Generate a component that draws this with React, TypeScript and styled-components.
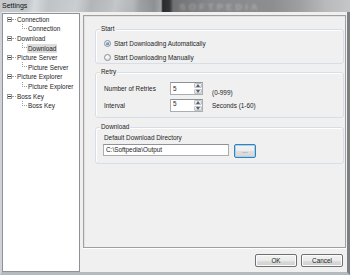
import React from 'react';
import styled, { createGlobalStyle } from 'styled-components';

const Global = createGlobalStyle`
  html, body { margin: 0; padding: 0; background: #f0f0f0; }
  body { font-family: "Liberation Sans", Arial, sans-serif; color: #1e1e1e; }
  * { box-sizing: border-box; }
`;

const Window = styled.div`
  width: 350px;
  height: 275px;
  display: flex;
  flex-direction: column;
  overflow: hidden;
  background: #f0f0f0;
`;

const TitleBar = styled.div`
  height: 12px;
  flex: none;
  display: flex;
  align-items: center;
  background:
    linear-gradient(100deg, transparent 0 8%, rgba(255,255,255,0.35) 10%, transparent 14%, rgba(255,255,255,0.25) 22%, transparent 26%, rgba(255,255,255,0.3) 33%, transparent 37%, rgba(0,0,0,0.08) 40%, transparent 44%),
    linear-gradient(90deg, #c6cacd 0%, #bcc0c3 20%, #a8acaf 32%, #b9bcbf 38%, #8e9194 44%, #a2a5a8 46%, #2a2a2a 46.5%, #363636 48.5%, #6f7173 49.5%, #85878a 60%, #8c8e90 78%, #9ea0a2 86%, #b7b9bb 93%, #c4c6c8 100%);
`;

const TitleText = styled.span`
  margin-left: 2px;
  font-size: 7px;
  line-height: 10px;
  color: #111;
`;

const Watermark = styled.span`
  margin-left: 152px;
  font-size: 9.5px;
  font-weight: bold;
  letter-spacing: 3px;
  line-height: 11px;
  color: rgba(220, 220, 220, 0.4);
  filter: blur(0.8px);
`;

const Frame = styled.div`
  flex: 1;
  display: flex;
  border-left: 2px solid #cfd3d7;
  border-right: 3px solid #7d8083;
  border-bottom: 3px solid #b4b9be;
  min-height: 0;
`;

const Tree = styled.div`
  width: 78px;
  flex: none;
  margin-top: 1px;
  background: #fff;
  border: 1px solid #8e9297;
  padding-top: 0.5px;
  display: flex;
  flex-direction: column;
`;

const TreeRow = styled.div`
  height: 9.6px;
  display: flex;
  align-items: center;
  font-size: 6.4px;
  white-space: nowrap;
`;

const ExpandBox = styled.span`
  width: 5px;
  height: 5px;
  margin-left: 4px;
  border: 1px solid #9a9a9a;
  display: flex;
  align-items: center;
  justify-content: center;
  background: #fff;
  &::after {
    content: '';
    width: 3px;
    height: 1px;
    background: #3a3a3a;
  }
`;

const Dash = styled.span`
  width: 4px;
  border-top: 1px dotted #a0a0a0;
`;

const Elbow = styled.span`
  align-self: flex-start;
  width: 5px;
  height: 5px;
  margin-left: 19px;
  border-left: 1px dotted #a0a0a0;
  border-bottom: 1px dotted #a0a0a0;
`;

const TreeLabel = styled.span<{ $selected?: boolean; $child?: boolean }>`
  margin-left: ${(p) => (p.$child ? '0' : '1px')};
  padding: 0 ${(p) => (p.$child ? '1px' : '0')};
  line-height: 9px;
  background: ${(p) => (p.$selected ? '#dcdcdc' : 'transparent')};
`;

const RightCol = styled.div`
  flex: 1;
  display: flex;
  flex-direction: column;
  margin-left: 3px;
  padding-right: 1px;
`;

const Panel = styled.div`
  margin-top: 3px;
  height: 233px;
  border: 1px solid #a0a0a0;
  box-shadow: inset 1px 1px 0 #e2e2e2, 0 1px 0 #fff;
  padding: 13px 1px 0 11px;
  display: flex;
  flex-direction: column;
`;

const Group = styled.div<{ $h: number; $gap: number }>`
  position: relative;
  height: ${(p) => p.$h}px;
  margin-top: ${(p) => p.$gap}px;
  border: 1px solid #d5dfe5;
  border-radius: 3px;
  box-shadow: inset 1px 1px 0 #fff;
  display: flex;
  flex-direction: column;
`;

const Legend = styled.span`
  position: absolute;
  top: -5px;
  left: 4px;
  padding: 0 1px;
  background: #f0f0f0;
  font-size: 6.4px;
  line-height: 8px;
`;

const RadioList = styled.div`
  padding: 8px 0 0 8px;
  display: flex;
  flex-direction: column;
  gap: 4.5px;
`;

const RadioRow = styled.label`
  height: 10px;
  display: flex;
  align-items: center;
  gap: 3px;
  font-size: 6.4px;
  white-space: nowrap;
`;

const RadioDot = styled.span<{ $checked?: boolean }>`
  width: 7px;
  height: 7px;
  border-radius: 50%;
  border: 1px solid #8f8f8f;
  background: radial-gradient(circle at 40% 35%, #ffffff 0%, #e6e6e6 60%, #cfcfcf 100%);
  display: flex;
  align-items: center;
  justify-content: center;
  &::after {
    content: '';
    display: ${(p) => (p.$checked ? 'block' : 'none')};
    width: 3px;
    height: 3px;
    border-radius: 50%;
    background: radial-gradient(circle at 40% 35%, #9fd6f7 0%, #2b7fc4 60%, #1a5a96 100%);
  }
`;

const RetryBody = styled.div`
  padding: 9px 0 0 7px;
  display: flex;
  flex-direction: column;
  gap: 3.5px;
`;

const FieldRow = styled.div`
  height: 13px;
  display: flex;
  align-items: center;
  font-size: 6.4px;
  white-space: nowrap;
`;

const FieldLabel = styled.span`
  width: 67px;
  padding-left: 1px;
`;

const Spinner = styled.div`
  width: 33px;
  height: 13px;
  border: 1px solid #abadb3;
  border-top-color: #8e9198;
  background: #fff;
  display: flex;
  align-items: stretch;
`;

const SpinValue = styled.span<{ $top?: boolean }>`
  flex: 1;
  padding-left: 2px;
  font-size: 6.4px;
  line-height: ${(p) => (p.$top ? '8px' : '11px')};
`;

const SpinButtons = styled.div`
  width: 8px;
  display: flex;
  flex-direction: column;
  gap: 1px;
`;

const SpinBtn = styled.span`
  flex: 1;
  background: linear-gradient(#f3f3f3, #dcdcdc);
  border: 1px solid #c3c3c3;
  border-radius: 1px;
  display: flex;
  align-items: center;
  justify-content: center;
`;

const Aside = styled.span<{ $drop?: number }>`
  margin-left: 9px;
  margin-top: ${(p) => p.$drop || 0}px;
`;

const DownloadBody = styled.div`
  padding: 6px 0 0 7px;
  display: flex;
  flex-direction: column;
  gap: 2px;
`;

const SubLabel = styled.span`
  margin-left: 1px;
  height: 8px;
  font-size: 6.4px;
  line-height: 8px;
  white-space: nowrap;
`;

const PathRow = styled.div`
  display: flex;
  align-items: flex-start;
  gap: 5px;
`;

const TextInput = styled.div`
  width: 126px;
  height: 12px;
  border: 1px solid #abadb3;
  border-top-color: #8e9198;
  background: #fff;
  padding-left: 2px;
  font-size: 6.4px;
  line-height: 10px;
  white-space: nowrap;
`;

const Button = styled.button<{ $focus?: boolean; $w: number; $h: number }>`
  width: ${(p) => p.$w}px;
  height: ${(p) => p.$h}px;
  padding: 0;
  margin: 0;
  border: 1px solid ${(p) => (p.$focus ? '#3c7fb1' : '#707070')};
  border-radius: 2px;
  background: ${(p) =>
    p.$focus
      ? 'linear-gradient(#f4f4f4 0%, #ececec 50%, #dfdfdf 51%, #d6d6d6 100%)'
      : 'linear-gradient(#f2f2f2 0%, #ebebeb 50%, #dddddd 51%, #cfcfcf 100%)'};
  box-shadow: inset 0 0 0 1px ${(p) => (p.$focus ? '#9ed3f3' : '#fcfcfc')};
  font-family: "Liberation Sans", Arial, sans-serif;
  font-size: 6.4px;
  line-height: 8px;
  color: ${(p) => (p.$focus ? '#6a6a6a' : '#1e1e1e')};
  display: flex;
  align-items: center;
  justify-content: center;
`;

const Footer = styled.div`
  margin-top: 6px;
  display: flex;
  justify-content: flex-end;
  gap: 4px;
  padding-right: 3px;
`;

const Arrow = ({ up }: { up?: boolean }) => (
  <svg width="4" height="3" viewBox="0 0 4 3">
    <polygon points={up ? '0,3 4,3 2,0' : '0,0 4,0 2,3'} fill="#4d6185" />
  </svg>
);

const treeItems: { text: string; child?: boolean; selected?: boolean }[] = [
  { text: 'Connection' },
  { text: 'Connection', child: true },
  { text: 'Download' },
  { text: 'Download', child: true, selected: true },
  { text: 'Picture Server' },
  { text: 'Picture Server', child: true },
  { text: 'Picture Explorer' },
  { text: 'Picture Explorer', child: true },
  { text: 'Boss Key' },
  { text: 'Boss Key', child: true },
];

export default function App() {
  return (
    <>
      <Global />
      <Window>
        <TitleBar>
          <TitleText>Settings</TitleText>
          <Watermark>SOFTPEDIA</Watermark>
        </TitleBar>
        <Frame>
          <Tree>
            {treeItems.map((it, i) => (
              <TreeRow key={i}>
                {it.child ? (
                  <Elbow />
                ) : (
                  <>
                    <ExpandBox />
                    <Dash />
                  </>
                )}
                <TreeLabel $child={it.child} $selected={it.selected}>
                  {it.text}
                </TreeLabel>
              </TreeRow>
            ))}
          </Tree>
          <RightCol>
            <Panel>
              <Group $h={35} $gap={0}>
                <Legend>Start</Legend>
                <RadioList>
                  <RadioRow>
                    <RadioDot $checked />
                    Start Downloading Automatically
                  </RadioRow>
                  <RadioRow>
                    <RadioDot />
                    Start Downloading Manually
                  </RadioRow>
                </RadioList>
              </Group>
              <Group $h={46} $gap={8}>
                <Legend>Retry</Legend>
                <RetryBody>
                  <FieldRow>
                    <FieldLabel>Number of Retries</FieldLabel>
                    <Spinner>
                      <SpinValue>5</SpinValue>
                      <SpinButtons>
                        <SpinBtn><Arrow up /></SpinBtn>
                        <SpinBtn><Arrow /></SpinBtn>
                      </SpinButtons>
                    </Spinner>
                    <Aside $drop={7}>(0-999)</Aside>
                  </FieldRow>
                  <FieldRow>
                    <FieldLabel>Interval</FieldLabel>
                    <Spinner>
                      <SpinValue $top>5</SpinValue>
                      <SpinButtons>
                        <SpinBtn><Arrow up /></SpinBtn>
                        <SpinBtn><Arrow /></SpinBtn>
                      </SpinButtons>
                    </Spinner>
                    <Aside>Seconds (1-60)</Aside>
                  </FieldRow>
                </RetryBody>
              </Group>
              <Group $h={37} $gap={9}>
                <Legend>Download</Legend>
                <DownloadBody>
                  <SubLabel>Default Download Directory</SubLabel>
                  <PathRow>
                    <TextInput>C:\Softpedia\Output</TextInput>
                    <Button $focus $w={22} $h={14}>...</Button>
                  </PathRow>
                </DownloadBody>
              </Group>
            </Panel>
            <Footer>
              <Button $w={42} $h={13}>OK</Button>
              <Button $w={42} $h={13}>Cancel</Button>
            </Footer>
          </RightCol>
        </Frame>
      </Window>
    </>
  );
}
